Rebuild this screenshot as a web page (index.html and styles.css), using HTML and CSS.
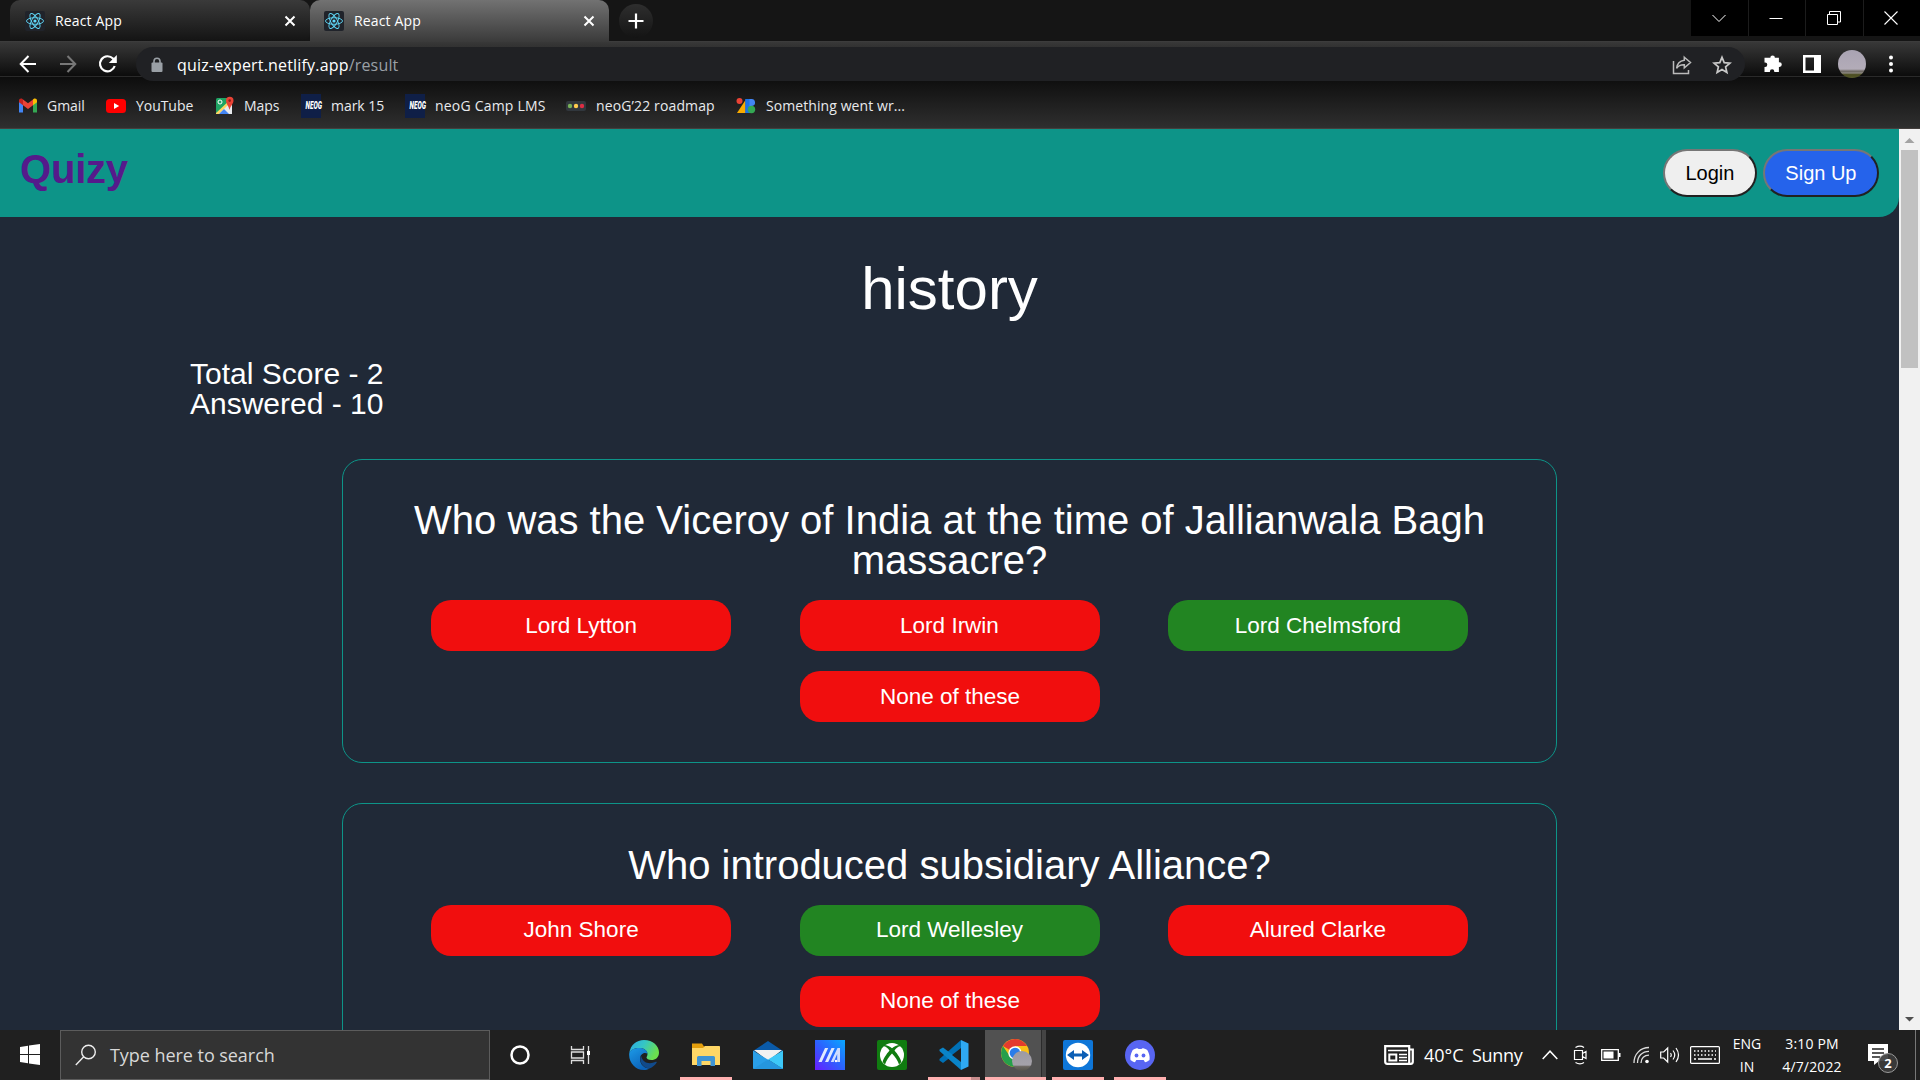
FILE: index.html
```html
<!DOCTYPE html>
<html lang="en">
<head>
<meta charset="utf-8">
<title>React App</title>
<link rel="stylesheet" href="styles.css">
</head>
<body>
<svg class="defs" width="0" height="0">
  <defs>
    <symbol id="react" viewBox="0 0 20 20">
      <rect width="20" height="20" rx="2" fill="#20232a"/>
      <g fill="none" stroke="#61dafb" stroke-width="0.9">
        <ellipse cx="10" cy="10" rx="8.5" ry="3.3"/>
        <ellipse cx="10" cy="10" rx="8.5" ry="3.3" transform="rotate(60 10 10)"/>
        <ellipse cx="10" cy="10" rx="8.5" ry="3.3" transform="rotate(120 10 10)"/>
      </g>
      <circle cx="10" cy="10" r="1.6" fill="#61dafb"/>
    </symbol>
    <symbol id="cross" viewBox="0 0 12 12"><path d="M1.5 1.5l9 9M10.5 1.5l-9 9" stroke="#fff" stroke-width="2" fill="none"/></symbol>
    <linearGradient id="edgeA" x1="0" y1="0" x2="1" y2="0.4"><stop offset="0" stop-color="#2aa8e8"/><stop offset="0.5" stop-color="#35c6c4"/><stop offset="1" stop-color="#6be04e"/></linearGradient>
    <linearGradient id="edgeB" x1="0" y1="0" x2="0.6" y2="1"><stop offset="0" stop-color="#1c9be8"/><stop offset="1" stop-color="#0b61b8"/></linearGradient>
    <linearGradient id="myasus" x1="0" y1="1" x2="1" y2="0"><stop offset="0" stop-color="#6a1cff"/><stop offset="0.5" stop-color="#2c62ff"/><stop offset="1" stop-color="#08a9ff"/></linearGradient>
    <linearGradient id="sky" x1="0" y1="0" x2="0" y2="1"><stop offset="0" stop-color="#a9a3b3"/><stop offset="0.68" stop-color="#b3acb8"/><stop offset="0.76" stop-color="#6b6660"/><stop offset="0.82" stop-color="#8b8680"/><stop offset="0.88" stop-color="#4b4d20"/><stop offset="1" stop-color="#55582a"/></linearGradient>
    <linearGradient id="badge" x1="0" y1="0" x2="0" y2="1"><stop offset="0" stop-color="#9c9aa2"/><stop offset="0.7" stop-color="#a5a2aa"/><stop offset="0.78" stop-color="#6b6660"/><stop offset="1" stop-color="#55534c"/></linearGradient>
  </defs>
</svg>

<header class="browser">
  <div class="tabstrip">
    <div class="tab">
      <svg class="favicon" width="20" height="20"><use href="#react"/></svg>
      <span class="tab-title">React App</span>
      <svg class="tab-close" width="12" height="12"><use href="#cross"/></svg>
    </div>
    <div class="tab active">
      <svg class="favicon" width="20" height="20"><use href="#react"/></svg>
      <span class="tab-title">React App</span>
      <svg class="tab-close" width="12" height="12"><use href="#cross"/></svg>
    </div>
    <div class="new-tab"><svg width="16" height="16"><path d="M8 0.5v15M0.5 8h15" stroke="#fff" stroke-width="2.2"/></svg></div>
    <div class="window-controls">
      <div class="control"><svg width="14" height="14"><path d="M0.500 4l6.500 6.500L13.500 4" fill="none" stroke="#fff"/></svg></div>
      <div class="control"><svg width="14" height="16"><path d="M0.500 8.500h13" stroke="#fff"/></svg></div>
      <div class="control"><svg width="14" height="14"><path d="M0.500 3.500h10v10h-10zM2.500 3.500v-3h11v10.500h-3" fill="none" stroke="#fff"/></svg></div>
      <div class="control"><svg width="14" height="14"><path d="M0.500 0.500l13 13M13.500 0.500l-13 13" stroke="#fff" stroke-width="1.100"/></svg></div>
    </div>
  </div>
  <div class="toolbar">
    <svg class="nav-icon" width="20" height="20"><path d="M18 10H3M10.500 2L2.700 10l7.800 8" fill="none" stroke="#fff" stroke-width="2"/></svg>
    <svg class="nav-icon" width="20" height="20"><path d="M2 10h15M9.500 2l7.800 8-7.800 8" fill="none" stroke="#777" stroke-width="2"/></svg>
    <svg class="nav-icon" width="20" height="20"><path d="M16.700 12A7.500 7.500 0 1 1 15 4.600L17 7" fill="none" stroke="#fff" stroke-width="2.200"/><path d="M18.800 1v8h-8z" fill="#fff"/></svg>
    <div class="address">
      <svg width="12" height="16"><rect x="0.500" y="5.500" width="11" height="9.500" rx="1" fill="#9aa0a6"/><path d="M3 6V4.200a3 3 0 0 1 6 0V6" fill="none" stroke="#9aa0a6" stroke-width="1.600"/></svg>
      <div class="url"><span>quiz-expert.netlify.app</span><span class="path">/result</span></div>
      <svg width="20" height="20"><path d="M1.500 6v12.500h15V15" fill="none" stroke="#bbb" stroke-width="1.500"/><path d="M12.300 2.200l6.200 5.300-6.200 5.300v-3C8.500 9.600 6.300 10.900 4.600 13.400 5.100 8.600 7.700 5.800 12.300 5.200z" fill="none" stroke="#bbb" stroke-width="1.500"/></svg>
      <svg width="20" height="20"><path d="M10 2.300l2.200 5.300 5.800.5-4.400 3.800 1.300 5.600L10 14.500l-4.900 3 1.300-5.600L2 8.100l5.800-.5z" fill="none" stroke="#c9c9c9" stroke-width="1.700"/></svg>
    </div>
    <svg class="extensions" width="20" height="20"><path d="M7.300 3.700a2.300 2.300 0 0 1 4.600 0h4v4.500h.5a2.400 2.400 0 0 1 0 4.800h-.5V18h-4.600v-.6a2.200 2.200 0 0 0-4.400 0v.6H1.500v-5.100h.6a2.200 2.200 0 0 0 0-4.400h-.6V3.700z" fill="#fff"/></svg>
    <svg class="side-panel" width="18" height="18"><path d="M0 0h18v18H0zM2.500 2.500v13H11v-13z" fill="#fff" fill-rule="evenodd"/></svg>
    <svg class="avatar" width="28" height="28"><circle cx="14" cy="14" r="14" fill="url(#sky)"/></svg>
    <svg class="menu" width="6" height="18"><g fill="#fff"><circle cx="3" cy="2.500" r="2"/><circle cx="3" cy="9" r="2"/><circle cx="3" cy="15.500" r="2"/></g></svg>
  </div>
  <div class="bookmarks">
    <div class="bm gmail"><svg width="20" height="20"><path d="M1 4v12.500h4V8z" fill="#4285f4"/><path d="M15 8v8.500h4V4z" fill="#34a853"/><path d="M1 4.500C1 2.600 3 2 4.500 3L5 3.500v5.800L1 6.300z" fill="#c5221f"/><path d="M5 3.500l5 3.800 5-3.800v5.800l-5 3.800-5-3.800z" fill="#ea4335"/><path d="M15 3.500l.5-.5C17 2 19 2.600 19 4.500v1.800l-4 3z" fill="#fbbc04"/></svg><span>Gmail</span></div>
    <div class="bm youtube"><svg width="20" height="20"><rect y="3" width="20" height="14" rx="3.500" fill="#f00"/><path d="M8 7l5.200 3L8 13z" fill="#fff"/></svg><span>YouTube</span></div>
    <div class="bm maps"><svg width="20" height="20"><rect x="1" y="2" width="16" height="16" rx="1.500" fill="#1fa463"/><path d="M2 18L17 4v14z" fill="#e8eaed"/><path d="M1 17L16 3l1 2L4 18H1z" fill="#fdd663"/><path d="M4 18l5-5 5 5z" fill="#4285f4"/><circle cx="5" cy="6" r="2" fill="none" stroke="#fff"/><path d="M14.500 14C13.600 9.500 11 8 11 4.500a3.500 3.500 0 0 1 7.500 0C18.500 8 15.500 9.500 14.500 14z" fill="#ea4335"/><circle cx="14.700" cy="4.600" r="1.300" fill="#8c1d18"/></svg><span>Maps</span></div>
    <div class="bm mark"><i class="neog"><b>NEOG</b></i><span>mark 15</span></div>
    <div class="bm lms"><i class="neog"><b>NEOG</b></i><span>neoG Camp LMS</span></div>
    <div class="bm roadmap"><svg width="20" height="20"><rect y="5" width="20" height="10" rx="2" fill="#31373d"/><circle cx="4" cy="10" r="2.200" fill="#78b159"/><circle cx="10" cy="10" r="2.200" fill="#ffcc4d"/><circle cx="16" cy="10" r="2.200" fill="#dd2e44"/></svg><span>neoG’22 roadmap</span></div>
    <div class="bm wrong"><svg width="20" height="20"><path d="M1 17L9.500 4v13z" fill="#f9ab00"/><path d="M9.500 3H15a3.500 3.500 0 0 1 1 7v7H9.500z" fill="#4285f4"/><path d="M9.500 3h4v14h-4z" fill="#1a73e8"/><circle cx="3.500" cy="5" r="3" fill="#ea4335"/><circle cx="15.500" cy="13.500" r="3.700" fill="#34a853"/></svg><span>Something went wr...</span></div>
  </div>
</header>

<div class="viewport">
  <main class="page">
    <nav class="site-nav">
      <h1 class="brand">Quizy</h1>
      <div class="actions">
        <button class="btn">Login</button>
        <button class="btn primary">Sign Up</button>
      </div>
    </nav>
    <h2 class="category">history</h2>
    <div class="score"><div>Total Score - 2</div><div>Answered - 10</div></div>
    <section class="card">
      <h3 class="question">Who was the Viceroy of India at the time of Jallianwala Bagh massacre?</h3>
      <div class="options">
        <div class="option">Lord Lytton</div>
        <div class="option">Lord Irwin</div>
        <div class="option correct">Lord Chelmsford</div>
      </div>
      <div class="options">
        <div class="option">None of these</div>
      </div>
    </section>
    <section class="card next">
      <h3 class="question">Who introduced subsidiary Alliance?</h3>
      <div class="options">
        <div class="option">John Shore</div>
        <div class="option correct">Lord Wellesley</div>
        <div class="option">Alured Clarke</div>
      </div>
      <div class="options">
        <div class="option">None of these</div>
      </div>
    </section>
  </main>
  <div class="scrollbar">
    <svg width="21" height="21"><path d="M5.500 14l5-5 5 5z" fill="#a3a3a3"/></svg>
    <div class="thumb"></div>
    <svg class="down" width="21" height="21"><path d="M6 8l4.500 4.500L15 8z" fill="#505050"/></svg>
  </div>
</div>

<footer class="taskbar">
  <div class="start"><svg width="20" height="22"><path d="M0 3l8-1.200V10H0zM9 1.600L20 0v10H9zM0 11h8v8.200L0 18zM9 11h11v10L9 19.400z" fill="#fff"/></svg></div>
  <div class="search">
    <svg width="22" height="22"><circle cx="13.500" cy="8" r="6.800" fill="none" stroke="#eee" stroke-width="1.400"/><path d="M8.700 12.800L0.800 21" stroke="#eee" stroke-width="1.400"/></svg>
    <span>Type here to search</span>
  </div>
  <div class="apps">
    <div class="app"><svg width="20" height="20"><circle cx="10" cy="10" r="8.500" fill="none" stroke="#fff" stroke-width="2.500"/></svg></div>
    <div class="app taskview"><svg width="22" height="20"><path d="M1.500 1v3.500h12V1M1.500 19v-3.500h12V19M1.500 7h12v6h-12zM18.500 1v18" fill="none" stroke="#ddd" stroke-width="1.300"/><path d="M17 6h3v4h-3z" fill="#fff"/></svg></div>
    <div class="app"><svg width="30" height="30"><path d="M0.300 13C1.500 5 7.500 0 15 0c9 0 15 6 15 12.500 0 5-3.600 7.500-7.500 7.500-3.200 0-5-1.400-5-2.500 0-.8 1-1.500 1-3.500 0-3-3.200-6-8-6C5.500 8 1.500 10 .3 13z" fill="url(#edgeA)"/><path d="M0.300 13C1.500 9.800 5.600 8 10.500 8c4.600 0 7.800 2.600 8 5.600-3.500-2-7.500.6-7.500 5.400 0 5.500 4.500 9.500 9.500 9.500-2 1-3.700 1.500-5.500 1.500C6 30-.8 22 .3 13z" fill="url(#edgeB)"/><path d="M12 15.500c-2.600 5 1.500 12.800 8.500 13 3-1.200 5.500-3.300 7.200-6 .3-.6-.1-1-.8-.7-6.900 3.200-13.400 1-14.900-6.300z" fill="#114a8b"/></svg></div>
    <div class="app running"><svg width="30" height="30"><path d="M1 3.500h10l2 3h15a1 1 0 0 1 1 1V24H1z" fill="#e59f0c"/><path d="M1 8h11l2-2h14a1 1 0 0 1 1 1v18H1z" fill="#ffd766"/><path d="M6 26V17.500A1.500 1.500 0 0 1 7.500 16h15a1.500 1.500 0 0 1 1.500 1.500V26h-4.500v-5h-9v5z" fill="#3f94d3"/></svg></div>
    <div class="app"><svg width="30" height="30"><path d="M0 11L15 1l15 10-15 5z" fill="#0a5aa8"/><path d="M1 10h28L15 21z" fill="#f2f2f2"/><path d="M0 10.500l30 18.500H1a1 1 0 0 1-1-1z" fill="#2a9fe8"/><path d="M30 10.500V29L15 19.500z" fill="#3dc8f8"/><path d="M0 29l15-9.500L30 29z" fill="#2596de"/></svg></div>
    <div class="app"><svg width="30" height="30"><rect width="30" height="30" fill="url(#myasus)"/><path d="M3.500 22l6.500-14h3.200L6.700 22zM10 22l6.500-14h3.200L13.200 22z" fill="#dfe9ff"/><path d="M15.800 22L22.500 8H25v14h-2.800v-8l-3.500 8z" fill="#cfdcff"/><circle cx="21" cy="21" r="1.200" fill="#fff"/></svg></div>
    <div class="app"><svg width="30" height="30"><rect width="30" height="30" rx="2" fill="#107c10"/><circle cx="15" cy="15" r="12" fill="#fff"/><path d="M7 5c3 0 6 1.700 8 3.300C17 6.700 20 5 23 5l1.500 1.500c-2.500-.8-5 1.500-7 4C20.500 14 24 19 24.300 22L22 24.500c-1-3.500-4-8-7-11-3 3-6 7.500-7 11L5.700 22c.3-3 3.800-8 6.800-11.500-2-2.500-4.500-4.800-7-4z" fill="#107c10"/></svg></div>
    <div class="app running stacked"><svg width="30" height="30"><path d="M22 0v9L4 23l-3.500-2.500V19z" fill="#0070b5"/><path d="M4 7.500L22 21v9L.5 11v-1.500z" fill="#0a84c8"/><path d="M22 0l7.500 3.500v23L22 30z" fill="#2fa9f2"/><path d="M22 8v14l-9-7z" fill="#202020"/></svg></div>
    <div class="app current"><svg width="34" height="34"><circle cx="16" cy="15" r="14" fill="#fbc116"/><path d="M16 15L3.900 8A14 14 0 0 1 28.100 8H16z" fill="#e33b2e"/><path d="M3.900 8A14 14 0 0 0 16 29l5.500-11L10 17z" fill="#269f4b"/><circle cx="16" cy="15" r="6.700" fill="#fff"/><circle cx="16" cy="15" r="5.300" fill="#2a7de9"/><circle cx="23" cy="23" r="10" fill="url(#badge)"/></svg></div>
    <div class="app running"><svg width="30" height="30"><rect width="30" height="30" rx="2" fill="#0e76d8"/><circle cx="15" cy="15" r="12.200" fill="#fff"/><path d="M4 15l7-5v3.500h8V10l7 5-7 5v-3.500h-8V20z" fill="#0c5fb5"/></svg></div>
    <div class="app running"><svg width="30" height="30"><circle cx="15" cy="15" r="15" fill="#5865f2"/><path d="M11 8.500c1.300-.4 2-.4 2.500.6h3c.5-1 1.200-1 2.500-.6 2 .4 3.200 1.200 3.800 2.500 1.500 3 2.200 6 1.700 9-1.500 1.300-3 2-4.500 2.300l-1.300-2.200h-7.400L10 22.300C8.500 22 7 21.300 5.500 20c-.5-3 .2-6 1.700-9 .6-1.300 1.800-2.100 3.800-2.500z" fill="#fff"/><circle cx="11.500" cy="15.500" r="1.900" fill="#5865f2"/><circle cx="18.500" cy="15.500" r="1.900" fill="#5865f2"/></svg></div>
  </div>
  <div class="tray">
    <svg class="news" width="30" height="20"><path d="M1.200 1.200h24v17.600h-22a2 2 0 0 1-2-2zM25.500 4.500h3.300v12.300a2 2 0 0 1-2 2h-2" fill="none" stroke="#fff" stroke-width="2.200"/><path d="M4 5.500h19M15 9.500h8M15 12.500h8M15 15.500h8" stroke="#fff" stroke-width="1.500"/><path d="M5.300 9.500h7v6h-7z" fill="none" stroke="#fff" stroke-width="2"/></svg>
    <span class="temp">40°C</span><span class="sky">Sunny</span>
    <svg class="t-chevron" width="16" height="16"><path d="M0.700 12L8 4.200l7.300 7.800" fill="none" stroke="#fff" stroke-width="1.500"/></svg>
    <svg class="t-cam" width="16" height="20"><path d="M2.500 5.500h8v9h-8zM10.500 8.500L14 6.500v7l-3.500-2M3.500 2.500C6.500.8 9.500.8 12 2.500M3.500 17.500c3 1.700 6 1.700 8.500 0" fill="none" stroke="#fff" stroke-width="1.200"/></svg>
    <svg class="t-battery" width="20" height="12"><path d="M0.700 0.700h16.600v10.600H0.700z" fill="none" stroke="#fff" stroke-width="1.300"/><path d="M2.500 2.500h10v7h-10zM18 4h1.500v4H18z" fill="#fff"/></svg>
    <svg class="t-wifi" width="18" height="18"><circle cx="14" cy="15.500" r="1.800" fill="#fff"/><g fill="none" stroke="#ddd" stroke-width="1.300"><path d="M1 17C1 8 7.500 1.500 16 1.500M4.500 17c0-7 4.800-11.700 11.500-11.700M8 17c0-4.800 3.300-7.800 8-7.800"/></g></svg>
    <svg class="t-volume" width="20" height="18"><path d="M0.700 6h3l4-4v14l-4-4h-3z" fill="none" stroke="#fff" stroke-width="1.200"/><path d="M10.500 7q1.500 2 0 4M13 4.500q3.500 4.500 0 9M16 2q5 7 0 14" fill="none" stroke="#fff" stroke-width="1.200"/></svg>
    <svg class="t-keyboard" width="30" height="18"><rect x="0.600" y="0.600" width="28.800" height="16.800" rx="1" fill="none" stroke="#fff" stroke-width="1.200"/><path d="M4 5h22M4 9h22" stroke="#fff" stroke-width="1.600" stroke-dasharray="1.500 2"/><path d="M4 13h2M8 13h14M24 13h2" stroke="#fff" stroke-width="1.400"/></svg>
    <div class="lang"><span>ENG</span><span>IN</span></div>
    <div class="clock"><span>3:10 PM</span><span>4/7/2022</span></div>
    <div class="notify"><svg width="20" height="22"><path d="M0 0h20v17h-9l-5 4v-4H0z" fill="#fff"/><path d="M4 5h12M4 9h12M4 13h8" stroke="#202020" stroke-width="1.300"/></svg><b class="count">2</b></div>
    <div class="peek"></div>
  </div>
</footer>
</body>
</html>
```
FILE: styles.css
```css
* { box-sizing: border-box; }
body {
  margin: 0;
  width: 1920px;
  height: 1080px;
  overflow: hidden;
  display: flex;
  flex-direction: column;
  background: #202937;
  font-family: "Liberation Sans", Arial, sans-serif;
}
svg { display: block; flex: none; }
.defs { position: absolute; }

/* Browser chrome */
.browser {
  height: 129px;
  flex: none;
  color: #fff;
  font-family: "Open Sans", "Noto Sans", sans-serif;
  font-size: 14px;
  white-space: nowrap;
}
.tabstrip {
  height: 42px;
  display: flex;
  align-items: flex-start;
  padding-left: 10px;
  background: #151515;
  border-bottom: 1px solid #3c3c3c;
}
.tab {
  width: 300px;
  height: 41px;
  display: flex;
  align-items: center;
  padding: 0 14px 0 15px;
  border-radius: 10px 10px 8px 0;
  background: linear-gradient(#3a3a3a, #141414);
}
.tab.active {
  width: 299px;
  height: 42px;
  padding: 0 14px 1px;
  border-radius: 10px 10px 0 0;
  background: linear-gradient(#727272, #3a3a3a);
}
.tab-title { margin-left: 10px; flex: 1; letter-spacing: 0.15px; }
.new-tab {
  width: 34px;
  height: 34px;
  margin: 4px 0 0 10px;
  display: grid;
  place-items: center;
  border-radius: 50%;
  background: linear-gradient(#2e2e2e, #141414);
}
.window-controls { display: flex; margin-left: auto; gap: 1px; background: #1c1c1c; }
.control { width: 56.500px; height: 36px; padding-right: 1px; display: grid; place-items: center; background: #000; }

.toolbar {
  height: 35px;
  display: flex;
  align-items: center;
  padding: 9px 25px 0 18px;
  background: linear-gradient(#383838, #0c0c0c);
  border-bottom: 1px solid #2a2a2a;
}
.toolbar > svg { position: relative; }
.nav-icon { margin-right: 20px; }
.address {
  width: 1609px;
  height: 34px;
  flex: none;
  margin: 0 18px 0 -2px;
  padding: 2px 13px 0 15px;
  display: flex;
  align-items: center;
  border-radius: 17px;
  background: #202124;
  font-size: 16px;
  position: relative;
}
.url { flex: 1; margin-left: 14px; letter-spacing: 0.18px; }
.path { color: #9aa0a6; }
.address svg + svg { margin-left: 20px; }
.avatar { margin: 0 22px 0 17px; }
.side-panel { margin-left: 20px; }

.bookmarks {
  height: 52px;
  display: flex;
  align-items: center;
  padding: 6px 0 0 18px;
  background: linear-gradient(#0d0d0d, #2f2f2f);
  border-bottom: 1px solid #443f3d;
  color: #e8eaed;
}
.bm { display: flex; align-items: center; gap: 10px; flex: none; }
.bm span { letter-spacing: -0.05px; }
.gmail { width: 88px; gap: 9px; }
.youtube { width: 109px; }
.maps { width: 86px; gap: 9px; }
.mark { width: 104px; }
.lms { width: 161px; }
.lms span { letter-spacing: 0.2px; }
.roadmap { width: 170px; }
.roadmap span { letter-spacing: 0.13px; }
.wrong span { letter-spacing: 0.08px; }
.neog {
  width: 20px;
  height: 24px;
  display: grid;
  place-items: center;
  background: #0f1f47;
  color: #fff;
  font: italic 900 10px "Roboto", sans-serif;
}
.neog b { transform: scaleX(0.64); font-weight: 900; }

/* Web page */
.viewport { height: 901px; flex: none; display: flex; overflow: hidden; }
.page { width: 1899px; overflow: hidden; color: #fff; }
.site-nav {
  height: 88px;
  padding: 20px;
  display: flex;
  justify-content: space-between;
  align-items: flex-start;
  background: #0d9488;
  border-bottom-right-radius: 20px;
}
.brand { margin: 0; font-size: 40px; line-height: 40px; letter-spacing: -0.2px; color: #551a8b; }
.actions { display: flex; gap: 6px; }
.btn {
  height: 48px;
  padding: 0 20.500px;
  border: 2px solid;
  border-color: #767676 #212121 #212121 #767676;
  border-radius: 24px;
  background: #efefef;
  color: #000;
  font: 20px "Liberation Sans", Arial, sans-serif;
}
.btn.primary { background: #2563eb; color: #fff; }
.category { margin: 42px 0 40px; font-size: 60px; line-height: 60px; font-weight: 400; text-align: center; }
.score { margin: 0 190px 40px; font-size: 30px; line-height: 30px; }
.card {
  width: 1215px;
  margin: 0 auto 40px;
  padding: 40px;
  border: 1px solid #0d9488;
  border-radius: 20px;
}
.card.next { padding-top: 41px; }
.question { margin: 0 0 20px; font-size: 40px; line-height: 40px; font-weight: 400; text-align: center; }
.options { display: flex; justify-content: center; gap: 68.400px; }
.options + .options { margin-top: 20px; padding-left: 1px; }
.option {
  width: 300px;
  height: 51px;
  border-radius: 20px;
  background: #f10e0e;
  font-size: 22.500px;
  line-height: 51px;
  text-align: center;
}
.next .option { line-height: 50px; }
.option.correct { background: #228522; }
.scrollbar { width: 21px; display: flex; flex-direction: column; background: #f1f1f1; }
.thumb { height: 218px; margin: 0 2px; background: #c1c1c1; }
.down { margin-top: auto; }

/* Taskbar */
.taskbar {
  height: 50px;
  flex: none;
  display: flex;
  background: #202020;
  color: #fff;
  font-family: "Open Sans", "Noto Sans", sans-serif;
  white-space: nowrap;
}
.start { width: 60px; display: grid; place-items: center; }
.search {
  width: 430px;
  display: flex;
  align-items: center;
  gap: 13px;
  padding-left: 14px;
  background: #333;
  border: 1px solid #5c5c5c;
  color: #d8d8d8;
  font-size: 18px;
  letter-spacing: -0.05px;
}
.apps { display: flex; }
.app {
  width: 52px;
  height: 50px;
  margin-right: 10px;
  padding-top: 2px;
  display: grid;
  place-items: center;
  border-bottom: 3px solid transparent;
}
.app:first-child { margin-left: 4px; margin-right: 9px; }
.taskview { margin-right: 11px; }
.running { border-bottom-color: #ffb0b0; }
.stacked {
  border-image: linear-gradient(90deg, #ffb0b0 41px, #c78c8c 41px) 3;
  border-width: 0 0 3px;
}
.current {
  width: 61px;
  margin: 0 6px 0 -5px;
  background: linear-gradient(90deg, #515151 56px, #2b2b2b 56px, #2b2b2b 57px, #444 57px);
  border-bottom-color: #ffb0b0;
}
.tray { margin-left: auto; display: flex; align-items: center; }
.temp { width: 48px; margin-left: 10px; font-size: 18px; }
.sky { width: 70px; font-size: 18px; letter-spacing: -0.3px; }
.t-cam { margin-left: 14px; }
.t-battery { margin-left: 13px; }
.t-wifi { margin-left: 12px; }
.t-volume { margin-left: 9px; }
.t-keyboard { margin-left: 10px; }
.lang, .clock { display: flex; flex-direction: column; align-items: center; font-size: 14px; line-height: 23px; }
.lang { width: 54px; }
.clock { width: 76px; letter-spacing: 0.15px; }
.notify { width: 47px; margin-left: 18px; position: relative; }
.count {
  position: absolute;
  left: 10px;
  top: 9px;
  width: 20px;
  height: 20px;
  border: 1px solid #999;
  border-radius: 50%;
  background: rgba(60, 60, 60, 0.92);
  font-size: 13px;
  line-height: 18px;
  text-align: center;
}
.peek { width: 5px; height: 50px; border-left: 1px solid #777; }
```
